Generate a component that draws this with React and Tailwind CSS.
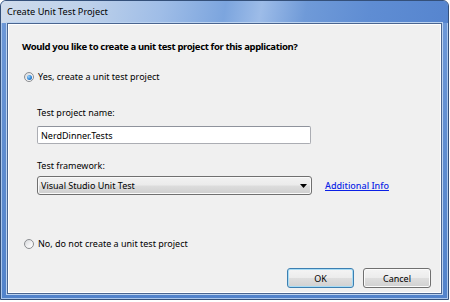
import React, { useState } from "react";

function Radio({ checked }) {
  return (
    <span className="relative flex size-[10px] shrink-0 items-center justify-center rounded-full border border-[#8b8d90] bg-[linear-gradient(135deg,#d4d6d9_0%,#f4f4f5_60%,#ffffff_100%)]">
      {checked && (
        <span className="size-[5px] rounded-full bg-[radial-gradient(circle_at_35%_35%,#9fd3fa_0%,#2f86d6_55%,#174f96_100%)]" />
      )}
    </span>
  );
}

function Button({ children, primary }) {
  return (
    <button
      className={`h-[20px] rounded-[3px] border text-[9px] leading-none text-black bg-[linear-gradient(180deg,#f4f4f4_0%,#ececec_48%,#dedede_52%,#d1d1d1_100%)] ${
        primary
          ? "w-[67px] border-[#3c7fb1] shadow-[inset_0_0_0_1px_#a8dcf5]"
          : "w-[68px] border-[#707070] shadow-[inset_0_0_0_1px_#fbfbfb]"
      }`}
    >
      {children}
    </button>
  );
}

export default function App() {
  const [choice, setChoice] = useState("yes");
  const [name, setName] = useState("NerdDinner.Tests");

  return (
    <div className="w-[450px] h-[302px] bg-white font-['Noto_Sans',sans-serif] text-black">
      <div className="flex h-[300px] w-[449px] flex-col rounded-t-[6px] border border-[#34507a] bg-[linear-gradient(180deg,#6f9ad9_0%,#5f8dd0_50%,#5283cb_100%)] shadow-[inset_0_0_0_1px_#abc7ec]">
        {/* title bar */}
        <div className="flex h-[22px] shrink-0 items-center rounded-t-[5px] pl-[6px] bg-[linear-gradient(100deg,#d0dcec_0%,#bcd0ea_20%,#9fbde7_36%,#7ca5de_50%,#9dbce8_58%,#6f9ad8_68%,#5f8dd3_82%,#5685cf_100%)]">
          <span className="text-[9.2px] leading-none">Create Unit Test Project</span>
        </div>

        {/* client area */}
        <div className="mx-[6px] mb-[5px] flex flex-1 flex-col border border-[#4a6590] bg-[#f0f0f0] pl-[14px] pr-[10px] shadow-[inset_0_0_0_1px_#ffffff,0_0_0_1px_#bcd3f0]">
          <p className="mt-[17px] text-[9.5px] font-bold leading-[12px] tracking-[-0.35px]">
            Would you like to create a unit test project for this application?
          </p>

          <label
            className="mt-[18px] ml-[2px] flex h-[12px] items-center gap-[4px] text-[9px]"
            onClick={() => setChoice("yes")}
          >
            <Radio checked={choice === "yes"} />
            <span>Yes, create a unit test project</span>
          </label>

          <div className="flex flex-col pl-[15px]">
            <span className="mt-[24px] text-[9px] leading-[12px]">Test project name:</span>
            <input
              value={name}
              onChange={(e) => setName(e.target.value)}
              className="mt-[7px] h-[18px] w-[274px] rounded-[2px] border border-[#abadb3] border-t-[#8f939c] bg-white px-[3px] text-[9px] outline-none"
            />

            <span className="mt-[16px] text-[9px] leading-[12px]">Test framework:</span>
            <div className="mt-[4px] flex items-center gap-[13px]">
              <div className="flex h-[19px] w-[275px] items-center justify-between rounded-[3px] border border-[#707070] bg-[linear-gradient(180deg,#f2f2f2_0%,#ebebeb_48%,#dddddd_52%,#cfcfcf_100%)] pl-[3px] pr-[4px] shadow-[inset_0_0_0_1px_#fafafa]">
                <span className="text-[9px] leading-none">Visual Studio Unit Test</span>
                <svg width="7" height="4" viewBox="0 0 7 4">
                  <path d="M0 0h7L3.5 4z" fill="#000" />
                </svg>
              </div>
              <a href="#" className="text-[9px] leading-none text-[#0a1fe6] underline font-medium">
                Additional Info
              </a>
            </div>
          </div>

          <label
            className="mt-[43px] ml-[2px] flex h-[12px] items-center gap-[4px] text-[9px]"
            onClick={() => setChoice("no")}
          >
            <Radio checked={choice === "no"} />
            <span>No, do not create a unit test project</span>
          </label>

          <div className="mt-[18px] flex justify-end gap-[9px]">
            <Button primary>OK</Button>
            <Button>Cancel</Button>
          </div>
        </div>
      </div>
    </div>
  );
}
